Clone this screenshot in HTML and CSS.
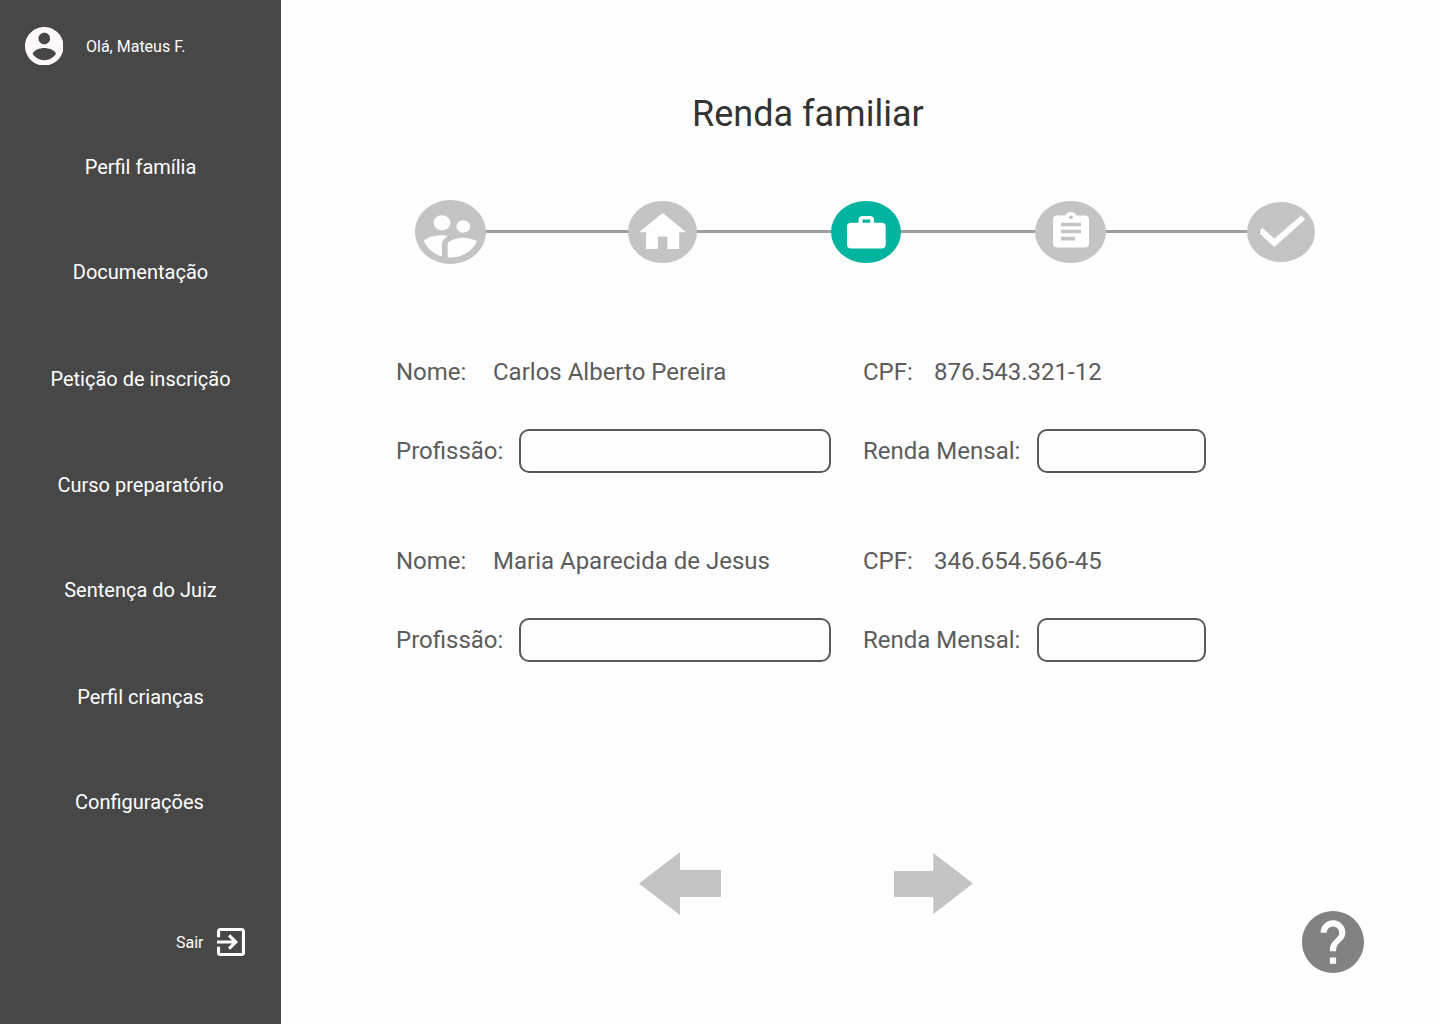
FILE: index.html
```html
<!DOCTYPE html>
<html lang="pt-BR">
<head>
<meta charset="utf-8">
<title>Renda familiar</title>
<link rel="stylesheet" href="styles.css">
</head>
<body>
<div class="page">
  <aside class="sidebar">
    <div class="user">
      <svg class="user-icon" viewBox="2 2 20 20"><path d="M12 2C6.48 2 2 6.48 2 12s4.48 10 10 10 10-4.48 10-10S17.52 2 12 2zm0 3c1.66 0 3 1.34 3 3s-1.34 3-3 3-3-1.34-3-3 1.34-3 3-3zm0 14.2c-2.5 0-4.71-1.28-6-3.22.03-1.99 4-3.08 6-3.08 1.99 0 5.97 1.09 6 3.08-1.29 1.94-3.5 3.22-6 3.22z"/></svg>
      <span>Olá, Mateus F.</span>
    </div>
    <nav class="menu">
      <a>Perfil família</a>
      <a>Documentação</a>
      <a>Petição de inscrição</a>
      <a>Curso preparatório</a>
      <a>Sentença do Juiz</a>
      <a>Perfil crianças</a>
      <a class="settings">Configurações</a>
    </nav>
    <div class="logout">
      <span>Sair</span>
      <svg class="logout-icon" viewBox="3 3 18 18"><path d="M10.09 15.59L11.5 17l5-5-5-5-1.41 1.41L12.67 11H3v2h9.67l-2.58 2.59zM19 3H5c-1.11 0-2 .9-2 2v4h2V5h14v14H5v-4H3v4c0 1.1.89 2 2 2h14c1.1 0 2-.9 2-2V5c0-1.1-.9-2-2-2z"/></svg>
    </div>
  </aside>

  <main class="content">
    <h1>Renda familiar</h1>

    <div class="steps">
      <svg class="step step-family" viewBox="2 2 20 20" preserveAspectRatio="none"><path d="M11.99 2c-5.52 0-10 4.48-10 10s4.48 10 10 10 10-4.48 10-10-4.48-10-10-10zm3.61 6.34c1.07 0 1.93.86 1.93 1.93 0 1.07-.86 1.93-1.93 1.93-1.07 0-1.93-.86-1.93-1.93-.01-1.07.86-1.93 1.93-1.93zm-6-1.58c1.3 0 2.36 1.06 2.36 2.36 0 1.3-1.06 2.36-2.36 2.36s-2.36-1.06-2.36-2.36c0-1.31 1.05-2.36 2.36-2.36zm0 9.13v3.75c-2.4-.75-4.3-2.6-5.14-4.96 1.05-1.12 3.67-1.69 5.14-1.69.53 0 1.2.08 1.9.22-1.64.87-1.9 2.02-1.9 2.68zM11.99 20c-.27 0-.53-.01-.79-.04v-4.07c0-1.42 2.94-2.13 4.4-2.13 1.07 0 2.92.39 3.84 1.15-1.17 2.97-4.06 5.09-7.45 5.09z"/></svg>
      <i class="line"></i>
      <div class="step step-home"><svg viewBox="2 3 20 17" preserveAspectRatio="none"><path d="M10 20v-6h4v6h5v-8h3L12 3 2 12h3v8z"/></svg></div>
      <i class="line"></i>
      <div class="step step-work"><svg viewBox="2 2 20 19" preserveAspectRatio="none"><path d="M20 6h-4V4c0-1.11-.89-2-2-2h-4c-1.11 0-2 .89-2 2v2H4c-1.11 0-1.99.89-1.99 2L2 19c0 1.11.89 2 2 2h16c1.11 0 2-.89 2-2V8c0-1.11-.89-2-2-2zm-6 0h-4V4h4v2z"/></svg></div>
      <i class="line"></i>
      <div class="step step-docs"><svg viewBox="3 1 18 20" preserveAspectRatio="none"><path d="M19 3h-4.18C14.4 1.84 13.3 1 12 1c-1.3 0-2.4.84-2.82 2H5c-1.1 0-2 .9-2 2v14c0 1.1.9 2 2 2h14c1.1 0 2-.9 2-2V5c0-1.1-.9-2-2-2zm-7 0c.55 0 1 .45 1 1s-.45 1-1 1-1-.45-1-1 .45-1 1-1zm2 14H7v-2h7v2zm3-4H7v-2h10v2zm0-4H7V7h10v2z"/></svg></div>
      <i class="line line-last"></i>
      <svg class="step step-done" viewBox="0 0 68 60"><path fill-rule="evenodd" d="M34 0A34 30 0 0 1 34 60A34 30 0 0 1 34 0zM27.4 36.6L15.4 26L11.2 30.2L27.4 45.1L58.3 17.3L54.1 13.4z"/></svg>
    </div>

    <form class="people">
      <section class="person">
        <span>Nome:</span><span class="name">Carlos Alberto Pereira</span>
        <span>CPF:</span><span class="cpf">876.543.321-12</span>
        <label for="job1">Profissão:</label><input class="job" id="job1" type="text">
        <label for="income1" class="income-label">Renda Mensal:</label><input class="income" id="income1" type="text">
      </section>
      <section class="person">
        <span>Nome:</span><span class="name">Maria Aparecida de Jesus</span>
        <span>CPF:</span><span class="cpf">346.654.566-45</span>
        <label for="job2">Profissão:</label><input class="job" id="job2" type="text">
        <label for="income2" class="income-label">Renda Mensal:</label><input class="income" id="income2" type="text">
      </section>
    </form>

    <div class="pager">
      <svg class="back" viewBox="0 0 82 63"><path d="M0 31.5L41 0v18h41v27H41v18z"/></svg>
      <svg class="next" viewBox="0 0 79 61"><path d="M79 30.5L39.3 0v18H0v26h39.3v17z"/></svg>
    </div>

    <svg class="help" viewBox="2 2 20 20"><path d="M12 2C6.48 2 2 6.48 2 12s4.48 10 10 10 10-4.48 10-10S17.52 2 12 2zm1 17h-2v-2h2v2zm2.07-7.75l-.9.92C13.45 12.9 13 13.5 13 15h-2v-.5c0-1.1.45-2.1 1.17-2.83l1.24-1.26c.37-.36.59-.86.59-1.41 0-1.1-.9-2-2-2s-2 .9-2 2H8c0-2.21 1.79-4 4-4s4 1.79 4 4c0 .88-.36 1.68-.93 2.25z"/></svg>
  </main>
</div>
</body>
</html>
```
FILE: styles.css
```css
* { box-sizing: border-box; }

body {
  margin: 0;
  font-family: Roboto, sans-serif;
  background: #fefefe;
}

svg { display: block; flex: none; }

.page { display: flex; height: 1024px; }

/* Sidebar */
.sidebar {
  flex: none;
  width: 281px;
  background: #474747;
  color: #fff;
}

.user {
  display: flex;
  align-items: center;
  gap: 22.8px;
  height: 39px;
  margin: 26.5px 0 0 24.6px;
  font-size: 16px;
  line-height: 19px;
}

.user-icon { width: 38.6px; height: 38.6px; fill: #fffafa; }

.menu {
  display: grid;
  grid-template-rows: 105px 107px 106px 105px 107px 105px 24px;
  width: 281px;
  margin-top: 89.5px;
  font-size: 20px;
  line-height: 24px;
  text-align: center;
}

.settings { padding-right: 2px; }

.logout {
  display: flex;
  align-items: center;
  gap: 13.5px;
  margin: 114px 0 0 176px;
  font-size: 16px;
  line-height: 19px;
}

.logout-icon { width: 28px; height: 28px; fill: #fff; }

/* Main column */
.content { flex: 1; padding-top: 93px; }

h1 {
  margin: 0 0 0 411px;
  font-size: 36px;
  font-weight: 400;
  line-height: 42px;
  color: #333;
}

/* Progress */
.steps {
  display: flex;
  align-items: center;
  width: 900px;
  height: 64px;
  margin: 65px 0 0 134px;
}

.step {
  display: flex;
  flex: none;
  justify-content: center;
  position: relative;
  fill: #fff;
}

div.step { height: 62px; border-radius: 50%; background: #c4c4c4; }

.line { flex: none; width: 142px; height: 3px; margin: 0 -1px 1px; background: #9e9e9e; }
.line:nth-of-type(1) { width: 143.5px; }
.line:nth-of-type(2),
.line:nth-of-type(3) { width: 136px; }
.line-last { width: 155px; margin-right: -13px; }

.step-family { width: 71px; height: 64px; fill: #c4c4c4; }
.step-home { width: 69.5px; padding-top: 12px; }
.step-home svg { width: 47.3px; height: 36.3px; }
div.step-work { width: 70px; padding: 15px 0 0 1px; background: #00b5a0; }
.step-work svg { width: 38.7px; height: 32.5px; }
.step-docs { width: 71px; padding: 11px 0 0 1px; }
.step-docs svg { width: 36px; height: 35.5px; }
.step-done { width: 68px; height: 60px; fill: #c4c4c4; }

/* Income form */
.people {
  display: grid;
  gap: 74px;
  margin: 94px 0 0 115px;
  font-size: 24px;
  line-height: 28px;
  color: #5c5c5c;
}

.person {
  display: grid;
  grid-template-columns: 97px 26px 312px 32px 71px 103px 169px;
  grid-template-rows: 28px 44px;
  row-gap: 43px;
  align-items: center;
  white-space: nowrap;
}

.person .name { grid-column: 2 / 5; }
.person .cpf { grid-column: 6 / 8; }
.person .job { grid-column: 3; }
.person .income-label { grid-column: 5; }
.person .income { grid-column: 7; }

.person input {
  width: 100%;
  height: 44px;
  border: 2px solid #5a5a5a;
  border-radius: 10px;
  background: #fefefe;
}

/* Navigation arrows */
.pager {
  display: flex;
  align-items: center;
  gap: 173px;
  margin: 190px 0 0 358px;
  fill: #c4c4c4;
}

.back { width: 82px; height: 63px; }
.next { width: 79px; height: 61px; }

.help {
  width: 62px;
  height: 62px;
  margin: -4px 76px 0 auto;
  fill: #828282;
}
```
